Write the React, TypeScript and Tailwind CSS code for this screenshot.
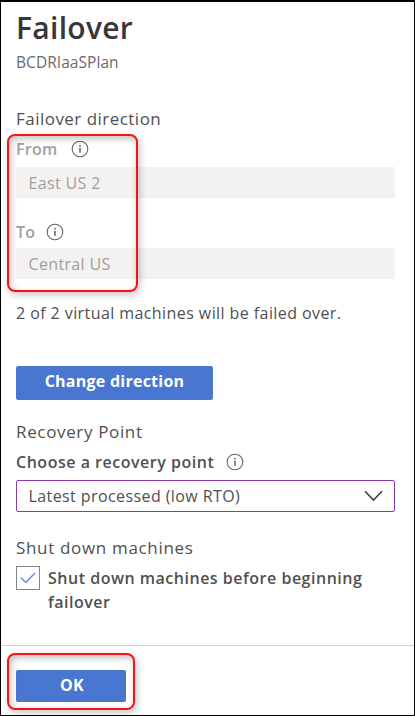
import React from "react";

function InfoIcon() {
  return (
    <svg width="18" height="18" viewBox="0 0 18 18" fill="none" className="shrink-0">
      <circle cx="9" cy="9" r="7.8" stroke="#666" strokeWidth="1.1" />
      <path d="M9 7.7v5M9 5v1.4" stroke="#444" strokeWidth="1.3" />
    </svg>
  );
}

function Highlight({ className }: { className: string }) {
  return (
    <div
      className={`pointer-events-none absolute rounded-[8px] border-[2.5px] border-[#fb1018] shadow-[2px_3px_7px_rgba(0,0,0,0.22),inset_2px_3px_7px_rgba(0,0,0,0.24)] ${className}`}
    />
  );
}

function ReadOnlyField({ value }: { value: string }) {
  return (
    <div className="flex h-[31px] w-[379px] items-center bg-[#f3f2f1] pl-[12.5px] tracking-[0.35px] text-[#a19f9d]">
      {value}
    </div>
  );
}

export default function App() {
  return (
    <div className="relative flex h-[716px] w-[415px] flex-col overflow-hidden border border-t-2 border-black bg-white font-['Open_Sans','Noto_Sans',sans-serif] text-[16px] leading-[20px] text-[#505050] whitespace-nowrap">
      <main className="flex h-[644px] flex-col border-b border-[#d2d2d2] pl-[15px]">
        <h1 className="mt-[6px] text-[30px] leading-[40px] font-semibold tracking-[0.3px] text-[#373737]">Failover</h1>
        <p className="mt-[4px] text-[15.5px] tracking-[0.05px] text-[#6b6b6b]">BCDRIaaSPlan</p>
        <h2 className="mt-[35px] text-[17px] leading-[24px] tracking-[0.47px]">Failover direction</h2>
        <div className="mt-[8px] flex items-center gap-[13px] font-semibold tracking-[0.3px] text-[#a19f9d]">
          <span>From</span>
          <InfoIcon />
        </div>
        <div className="mt-[8px]"><ReadOnlyField value="East US 2" /></div>
        <div className="mt-[24px] flex items-center gap-[11px] font-semibold tracking-[0.3px] text-[#a19f9d]">
          <span>To</span>
          <InfoIcon />
        </div>
        <div className="mt-[6px]"><ReadOnlyField value="Central US" /></div>
        <p className="mt-[24px] tracking-[0.42px]">2 of 2 virtual machines will be failed over.</p>
        <button className="mt-[43px] flex h-[34px] w-[197px] items-center justify-center rounded-[2px] bg-[#4876d0] pb-[4px] font-bold tracking-[0.25px] text-white">
          Change direction
        </button>
        <h2 className="mt-[20px] text-[17px] leading-[24px] tracking-[0.65px]">Recovery Point</h2>
        <div className="mt-[8px] flex items-center gap-[11.5px] font-semibold">
          <span className="tracking-[0.52px]">Choose a recovery point</span>
          <InfoIcon />
        </div>
        <div className="mt-[8px] flex h-[32px] w-[379px] items-center justify-between rounded-[2px] border border-[#8a3ab0] pr-[11px] pl-[11.5px]">
          <span className="tracking-[0.41px]">Latest processed (low RTO)</span>
          <svg width="19" height="12" viewBox="0 0 19 12" fill="none">
            <path d="M1 1.2 9.5 10 18 1.2" stroke="#444" strokeWidth="1.6" />
          </svg>
        </div>
        <h2 className="mt-[24px] text-[17px] leading-[24px] tracking-[0.67px]">Shut down machines</h2>
        <div className="mt-[6px] flex gap-[8px] leading-[24px] font-semibold tracking-[0.51px]">
          <span className="flex h-[24px] w-[24px] items-center justify-center border border-[#858585]">
            <svg width="16" height="12" viewBox="0 0 16 12" fill="none">
              <path d="M1 5.8 5.8 10.5 15 1" stroke="#6d87e8" strokeWidth="1.5" />
            </svg>
          </span>
          <span>Shut down machines before beginning<br />failover</span>
        </div>
      </main>
      <footer className="pt-[24px] pl-[15px]">
        <button className="flex h-[32px] w-[110px] items-center justify-center rounded-[2px] bg-[#4876d0] pb-[3px] pl-[2px] font-bold tracking-[0.4px] text-white">
          OK
        </button>
      </footer>
      <Highlight className="top-[132px] left-[6px] h-[158px] w-[131px]" />
      <Highlight className="top-[651px] left-[6px] h-[57px] w-[128px]" />
    </div>
  );
}
